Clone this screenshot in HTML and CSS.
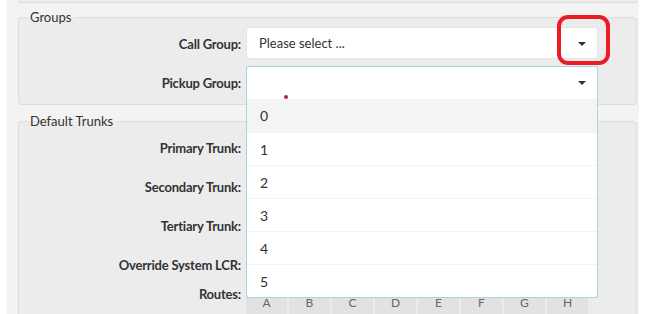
FILE: index.html
```html
<!DOCTYPE html>
<html>
<head>
<meta charset="utf-8">
<link rel="stylesheet" href="styles.css">
</head>
<body>
<div class="page">
  <div class="prev"></div>
  <fieldset class="group">
    <legend>Groups</legend>
    <div class="row">
      <label class="lbl">Call Group:</label>
      <div class="select">Please select ...<span class="caret"></span></div>
    </div>
    <div class="row">
      <label class="lbl">Pickup Group:</label>
      <div class="select open">
        <span class="caret"></span>
        <ul class="dropdown">
          <li class="opt hover">0</li>
          <li class="opt">1</li>
          <li class="opt">2</li>
          <li class="opt">3</li>
          <li class="opt">4</li>
          <li class="opt">5</li>
        </ul>
      </div>
    </div>
  </fieldset>
  <fieldset class="group trunks">
    <legend>Default Trunks</legend>
    <div class="row">
      <label class="lbl">Primary Trunk:</label>
      <div class="select"></div>
    </div>
    <div class="row">
      <label class="lbl">Secondary Trunk:</label>
      <div class="select"></div>
    </div>
    <div class="row">
      <label class="lbl">Tertiary Trunk:</label>
      <div class="select"></div>
    </div>
    <div class="row">
      <label class="lbl">Override System LCR:</label>
      <div class="select"></div>
    </div>
    <div class="row routes-row">
      <label class="lbl top">Routes:</label>
      <div class="routes">
        <span class="route">A</span><span class="route">B</span><span class="route">C</span><span class="route">D</span><span class="route">E</span><span class="route">F</span><span class="route">G</span><span class="route">H</span>
      </div>
    </div>
  </fieldset>
  <div class="annot"></div>
  <div class="cursor"></div>
</div>
</body>
</html>
```

FILE: styles.css
```css
html, body {
  margin: 0;
  padding: 0;
  background: #ffffff;
}
body {
  font-family: Lato, "Open Sans", sans-serif;
  color: #333;
}
.page {
  position: relative;
  margin-left: 7px;
  width: 632px;
  height: 314px;
  box-sizing: border-box;
  padding: 0 2px 0 11px;
  background: #f3f3f3;
  overflow: hidden;
}
.prev {
  height: 2px;
  background: #ececec;
  border: 1px solid #dcdcdc;
  border-top: none;
  border-radius: 0 0 4px 4px;
}
.group {
  margin: 6px 0 0 0;
  padding: 2px 0 6px 0;
  min-width: 0;
  border: 1px solid #dcdcdc;
  border-radius: 4px;
  background: #ececec;
}
.group legend {
  margin-left: 8px;
  padding: 0 3px;
  font-size: 13px;
  line-height: 16px;
  color: #333;
}
.trunks {
  margin-top: 8px;
}
.row {
  display: grid;
  grid-template-columns: 222px 352px;
  column-gap: 5px;
  align-items: center;
  margin-bottom: 7px;
}
.row:last-child {
  margin-bottom: 0;
}
.lbl {
  text-align: right;
  font-weight: 700;
  font-size: 13px;
  letter-spacing: -0.2px;
  line-height: 16px;
  color: #333;
  padding-top: 1px;
}
.lbl.top {
  align-self: start;
  margin-top: -2px;
}
.select {
  position: relative;
  height: 32px;
  box-sizing: border-box;
  border: 1px solid #e4e4e4;
  border-radius: 3px;
  background: #fff;
  padding-left: 12px;
  font-size: 13px;
  line-height: 30px;
  color: #333;
}
.caret {
  position: absolute;
  right: 11px;
  top: 14px;
  width: 0;
  height: 0;
  border-left: 4px solid transparent;
  border-right: 4px solid transparent;
  border-top: 4px solid #333;
}
.select.open {
  border-color: #a9d2e2;
  border-bottom: none;
  border-radius: 3px 3px 0 0;
  z-index: 5;
}
.dropdown {
  position: absolute;
  left: -1px;
  right: -1px;
  top: 31px;
  margin: 0;
  padding: 1px 0 0 0;
  list-style: none;
  background: #fff;
  border: 1px solid #a9d2e2;
  border-top: none;
  border-radius: 0 0 3px 3px;
}
.opt {
  height: 33px;
  box-sizing: border-box;
  padding-left: 13px;
  font-size: 14px;
  line-height: 33px;
  color: #333;
  border-top: 1px solid #f4f4f4;
}
.opt:first-child {
  border-top: none;
}
.opt.hover {
  background: #f4f4f4;
}
.routes {
  display: grid;
  grid-template-columns: repeat(8, 41px);
  column-gap: 2px;
}
.route {
  height: 30px;
  background: #e2e2e2;
  border-radius: 2px;
  text-align: center;
  font-size: 12px;
  line-height: 32px;
  color: #666;
}
.annot {
  position: absolute;
  left: 550px;
  top: 15px;
  width: 45px;
  height: 42px;
  border: 4px solid #ec1c24;
  border-radius: 11px;
  z-index: 10;
}
.cursor {
  position: absolute;
  left: 277px;
  top: 95px;
  width: 4px;
  height: 4px;
  border-radius: 50%;
  background: #b8186f;
  z-index: 10;
}
```
